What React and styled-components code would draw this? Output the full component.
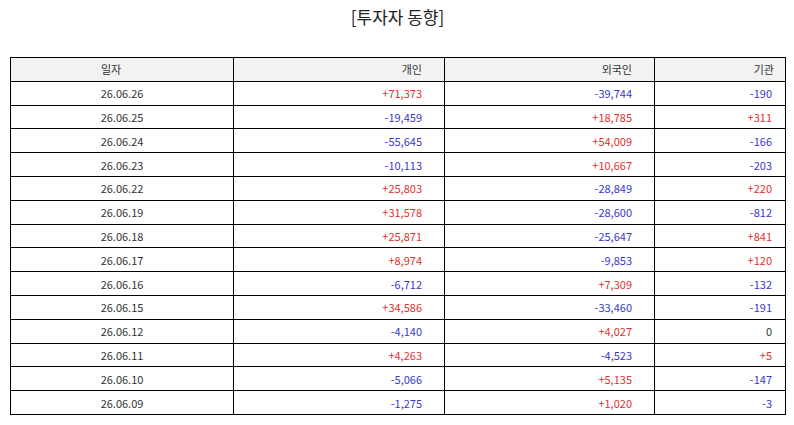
import styled, { createGlobalStyle } from "styled-components";

const GlobalStyle = createGlobalStyle`
  html, body {
    margin: 0;
    padding: 0;
    background: #ffffff;
  }
  body {
    font-family: "Noto Sans CJK KR", "Noto Sans", sans-serif;
    color: #333333;
  }
`;

const Page = styled.div`
  width: 794px;
  height: 425px;
  padding: 0 9px 0 10px;
  box-sizing: border-box;
  display: flex;
  flex-direction: column;
`;

const Title = styled.h2`
  margin: 5px 0 0;
  height: 24px;
  line-height: 24px;
  font-size: 17px;
  font-weight: 400;
  text-align: center;
  color: #222222;
`;

const Table = styled.table`
  margin-top: 28px;
  width: 775px;
  border-collapse: collapse;
  table-layout: fixed;
  font-size: 11px;
`;

const HeadCell = styled.th`
  height: 22.8px;
  padding: 0 ${(p) => (p.$last ? "11px" : "22px")} 0 0;
  border: 1px solid #000000;
  background: #f2f2f2;
  font-weight: 400;
  color: #333333;
  text-align: ${(p) => (p.$center ? "center" : "right")};
`;

const Cell = styled.td`
  height: 22.8px;
  padding: 0 ${(p) => (p.$center ? "0" : p.$last ? "13px" : "22px")} 0 0;
  border: 1px solid #000000;
  text-align: ${(p) => (p.$center ? "center" : "right")};
  color: ${(p) =>
    p.$value > 0 ? "#e0302f" : p.$value < 0 ? "#3838c8" : "#333333"};
`;

const rows = [
  ["26.06.26", 71373, -39744, -190],
  ["26.06.25", -19459, 18785, 311],
  ["26.06.24", -55645, 54009, -166],
  ["26.06.23", -10113, 10667, -203],
  ["26.06.22", 25803, -28849, 220],
  ["26.06.19", 31578, -28600, -812],
  ["26.06.18", 25871, -25647, 841],
  ["26.06.17", 8974, -9853, 120],
  ["26.06.16", -6712, 7309, -132],
  ["26.06.15", 34586, -33460, -191],
  ["26.06.12", -4140, 4027, 0],
  ["26.06.11", 4263, -4523, 5],
  ["26.06.10", -5066, 5135, -147],
  ["26.06.09", -1275, 1020, -3],
];

function fmt(n) {
  if (n === 0) return "0";
  let s = Math.abs(n).toLocaleString("en-US");
  return (n > 0 ? "+" : "-") + s;
}

function App() {
  return (
    <Page>
      <GlobalStyle />
      <Title>[투자자 동향]</Title>
      <Table>
        <colgroup>
          <col style={{ width: 223 }} />
          <col style={{ width: 211 }} />
          <col style={{ width: 210 }} />
          <col style={{ width: 131 }} />
        </colgroup>
        <thead>
          <tr>
            <HeadCell $center>일자</HeadCell>
            <HeadCell>개인</HeadCell>
            <HeadCell>외국인</HeadCell>
            <HeadCell $last>기관</HeadCell>
          </tr>
        </thead>
        <tbody>
          {rows.map((r) => (
            <tr key={r[0]}>
              <Cell $center $value={0}>{r[0]}</Cell>
              <Cell $value={r[1]}>{fmt(r[1])}</Cell>
              <Cell $value={r[2]}>{fmt(r[2])}</Cell>
              <Cell $last $value={r[3]}>{fmt(r[3])}</Cell>
            </tr>
          ))}
        </tbody>
      </Table>
    </Page>
  );
}

export default App;
